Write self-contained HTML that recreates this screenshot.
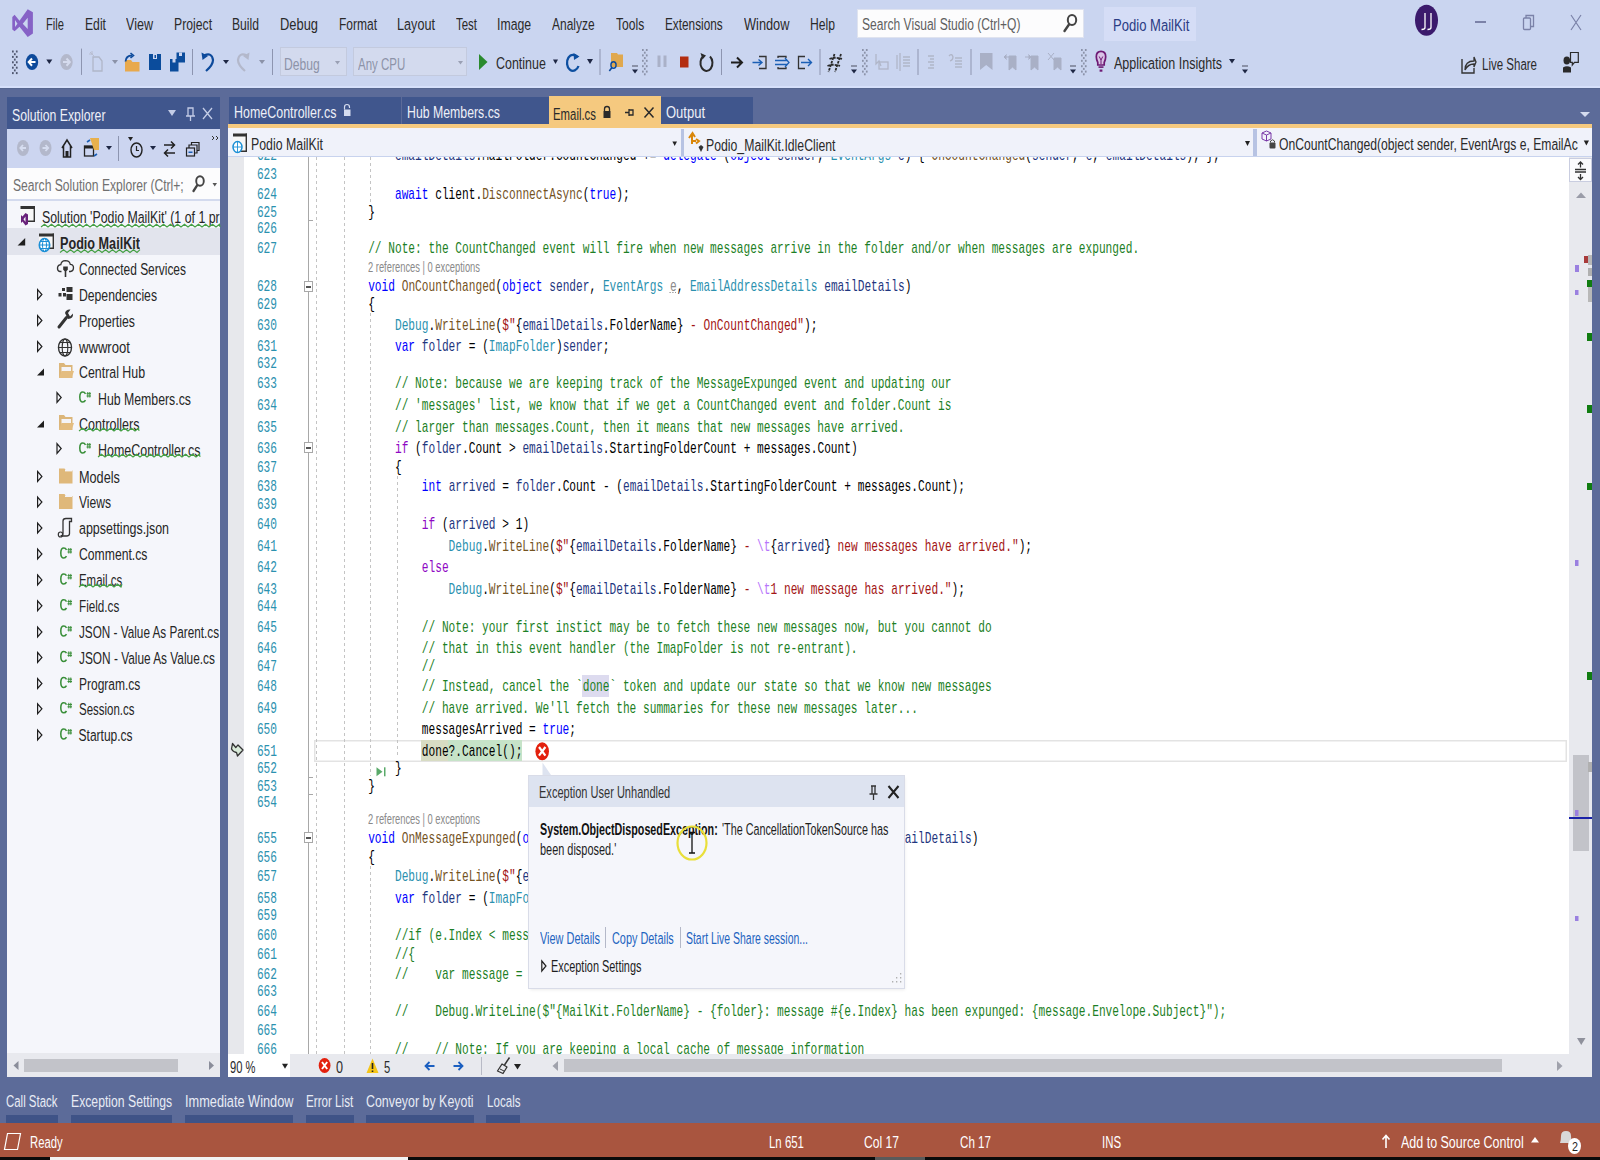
<!DOCTYPE html>
<html><head><meta charset="utf-8"><title>Visual Studio</title>
<style>
html,body{margin:0;padding:0}
body{width:1600px;height:1160px;position:relative;overflow:hidden;background:#5c6b99;font-family:"Liberation Sans",sans-serif}
.r{position:absolute}
.t{position:absolute;white-space:pre;height:20px;line-height:20px;transform-origin:0 50%}
.c{position:absolute;white-space:pre;height:20px;line-height:20px;font-family:"Liberation Mono",monospace;font-size:11.18px;color:#000;transform:scaleY(1.44);transform-origin:0 50%}
.clip{position:absolute;overflow:hidden}
</style></head><body>
<div class="r" style="left:0px;top:0px;width:1600px;height:86px;background:#cad5f0;"></div>
<div class="r" style="left:0px;top:86px;width:1600px;height:2px;background:#d6e0fa;"></div>
<div class="r" style="left:0px;top:88px;width:1600px;height:1px;background:#56668f;"></div>
<div class="r" style="left:280px;top:47px;width:67px;height:29px;background:#d3daee;box-shadow:inset 0 0 0 1px #c3cade;"></div>
<div class="r" style="left:353px;top:47px;width:114px;height:29px;background:#d3daee;box-shadow:inset 0 0 0 1px #c3cade;"></div>
<div class="r" style="left:7px;top:97px;width:213px;height:32px;background:#40568d;"></div>
<div class="r" style="left:7px;top:129px;width:213px;height:39px;background:#ccd5f0;"></div>
<div class="r" style="left:7px;top:168px;width:213px;height:31px;background:#fcfcfd;"></div>
<div class="r" style="left:7px;top:199px;width:213px;height:2px;background:#d3daee;"></div>
<div class="r" style="left:7px;top:201px;width:213px;height:852px;background:#f5f6fb;"></div>
<div class="r" style="left:7px;top:228px;width:213px;height:27px;background:#e2e4ed;"></div>
<div class="r" style="left:7px;top:1053px;width:213px;height:24px;background:#e8e9ee;"></div>
<div class="r" style="left:24px;top:1059px;width:154px;height:13px;background:#c2c3c9;"></div>
<div class="r" style="left:229px;top:97px;width:172px;height:27px;background:#40568d;"></div>
<div class="r" style="left:402px;top:97px;width:147px;height:27px;background:#40568d;"></div>
<div class="r" style="left:549px;top:96px;width:112px;height:28px;background:#f5c97f;"></div>
<div class="r" style="left:661px;top:97px;width:92px;height:27px;background:#40568d;"></div>
<div class="r" style="left:228px;top:124px;width:1364px;height:4px;background:#f5c97f;"></div>
<div class="r" style="left:228px;top:157px;width:1364px;height:897px;background:#ffffff;"></div>
<div class="r" style="left:228px;top:157px;width:16px;height:897px;background:#e7e8ec;"></div>
<div class="r" style="left:308px;top:157px;width:1px;height:897px;background:#a8a8a8;"></div>
<div class="r" style="left:228px;top:1054px;width:1364px;height:23px;background:#e8e9ee;"></div>
<div class="r" style="left:228px;top:1054px;width:62px;height:23px;background:#ffffff;"></div>
<div class="r" style="left:564px;top:1059px;width:938px;height:13px;background:#c2c3c9;"></div>
<div class="r" style="left:1569px;top:157px;width:23px;height:897px;background:#e8e9ee;"></div>
<div class="r" style="left:1573px;top:755px;width:16px;height:96px;background:#c2c3c9;"></div>
<div class="r" style="left:0px;top:1123px;width:1600px;height:34px;background:#a9553f;"></div>
<div class="r" style="left:0px;top:1157px;width:1600px;height:3px;background:#0a0a0a;"></div>
<div class="r" style="left:50px;top:1157px;width:358px;height:3px;background:#f2f2f2;"></div>
<div class="r" style="left:875px;top:1157px;width:50px;height:3px;background:#5a5a5a;"></div>
<div class="clip" style="left:228px;top:157px;width:1341px;height:897px"><div style="position:absolute;left:-228px;top:-157px;width:1600px;height:1160px">
<div class="r" style="left:314px;top:740px;width:1253px;height:22px;background:transparent;box-shadow:inset 0 0 0 1.5px #e3e3e3;"></div>
<div class="r" style="left:421px;top:740px;width:27px;height:21px;background:#d8dcc3;"></div>
<div class="r" style="left:448px;top:740px;width:74px;height:21px;background:#c6e3c8;"></div>
<div class="r" style="left:582px;top:675px;width:27px;height:22px;background:#dddbef;"></div>
<div class="r" style="left:316px;top:157px;width:1px;height:897px;background:repeating-linear-gradient(#c4c4c4 0 3px,transparent 3px 6px)"></div>
<div class="r" style="left:344px;top:157px;width:1px;height:897px;background:repeating-linear-gradient(#c4c4c4 0 3px,transparent 3px 6px)"></div>
<div class="r" style="left:370px;top:157px;width:1px;height:45px;background:repeating-linear-gradient(#c4c4c4 0 3px,transparent 3px 6px)"></div>
<div class="r" style="left:370px;top:313px;width:1px;height:463px;background:repeating-linear-gradient(#c4c4c4 0 3px,transparent 3px 6px)"></div>
<div class="r" style="left:370px;top:866px;width:1px;height:188px;background:repeating-linear-gradient(#c4c4c4 0 3px,transparent 3px 6px)"></div>
<div class="r" style="left:397px;top:476px;width:1px;height:282px;background:repeating-linear-gradient(#c4c4c4 0 3px,transparent 3px 6px)"></div>
<div class="r" style="left:309px;top:220px;width:4px;height:1px;background:#a8a8a8;"></div>
<div class="r" style="left:309px;top:777px;width:4px;height:1px;background:#a8a8a8;"></div>
<div class="r" style="left:309px;top:794px;width:4px;height:1px;background:#a8a8a8;"></div>
<div class="r" style="left:304px;top:281px;width:9px;height:11px;background:#ffffff;box-shadow:inset 0 0 0 1px #a8a8a8;"></div>
<div class="r" style="left:306px;top:286px;width:5px;height:1.5px;background:#555;"></div>
<div class="r" style="left:304px;top:442px;width:9px;height:11px;background:#ffffff;box-shadow:inset 0 0 0 1px #a8a8a8;"></div>
<div class="r" style="left:306px;top:447px;width:5px;height:1.5px;background:#555;"></div>
<div class="r" style="left:304px;top:832px;width:9px;height:11px;background:#ffffff;box-shadow:inset 0 0 0 1px #a8a8a8;"></div>
<div class="r" style="left:306px;top:837px;width:5px;height:1.5px;background:#555;"></div>
<div class="c" style="left:256.88px;top:146.00px;color:#2b91af">622</div>
<div class="c" style="left:314.5px;top:146.00px"><span style="color:#000000">            </span><span style="color:#1f377f">emailDetails</span><span style="color:#000000">.</span><span style="color:#000000">MailFolder</span><span style="color:#000000">.</span><span style="color:#000000">CountChanged</span><span style="color:#000000"> += </span><span style="color:#0000ff">delegate</span><span style="color:#000000"> (</span><span style="color:#0000ff">object</span><span style="color:#000000"> </span><span style="color:#1f377f">sender</span><span style="color:#000000">, </span><span style="color:#2b91af">EventArgs</span><span style="color:#000000"> </span><span style="color:#1f377f">e</span><span style="color:#000000">) { </span><span style="color:#74531f">OnCountChanged</span><span style="color:#000000">(</span><span style="color:#1f377f">sender</span><span style="color:#000000">, </span><span style="color:#1f377f">e</span><span style="color:#000000">, </span><span style="color:#1f377f">emailDetails</span><span style="color:#000000">); };</span></div>
<div class="c" style="left:256.88px;top:165.00px;color:#2b91af">623</div>
<div class="c" style="left:256.88px;top:185.00px;color:#2b91af">624</div>
<div class="c" style="left:314.5px;top:185.00px"><span style="color:#000000">            </span><span style="color:#0000ff">await</span><span style="color:#000000"> </span><span style="color:#000000">client</span><span style="color:#000000">.</span><span style="color:#74531f">DisconnectAsync</span><span style="color:#000000">(</span><span style="color:#0000ff">true</span><span style="color:#000000">);</span></div>
<div class="c" style="left:256.88px;top:202.50px;color:#2b91af">625</div>
<div class="c" style="left:314.5px;top:202.50px"><span style="color:#000000">        }</span></div>
<div class="c" style="left:256.88px;top:219.00px;color:#2b91af">626</div>
<div class="c" style="left:256.88px;top:239.00px;color:#2b91af">627</div>
<div class="c" style="left:314.5px;top:239.00px">        <span style="color:#1d7f26">// Note: the CountChanged event will fire when new messages arrive in the folder and/or when messages are expunged.</span></div>
<div class="c" style="left:256.88px;top:277.00px;color:#2b91af">628</div>
<div class="c" style="left:314.5px;top:277.00px"><span style="color:#000000">        </span><span style="color:#0000ff">void</span><span style="color:#000000"> </span><span style="color:#74531f">OnCountChanged</span><span style="color:#000000">(</span><span style="color:#0000ff">object</span><span style="color:#000000"> </span><span style="color:#1f377f">sender</span><span style="color:#000000">, </span><span style="color:#2b91af">EventArgs</span><span style="color:#000000"> </span><span style="color:#8a8a8a">e</span><span style="color:#000000">, </span><span style="color:#2b91af">EmailAddressDetails</span><span style="color:#000000"> </span><span style="color:#1f377f">emailDetails</span><span style="color:#000000">)</span></div>
<div class="c" style="left:256.88px;top:295.40px;color:#2b91af">629</div>
<div class="c" style="left:314.5px;top:295.40px"><span style="color:#000000">        {</span></div>
<div class="c" style="left:256.88px;top:315.90px;color:#2b91af">630</div>
<div class="c" style="left:314.5px;top:315.90px"><span style="color:#000000">            </span><span style="color:#2b91af">Debug</span><span style="color:#000000">.</span><span style="color:#74531f">WriteLine</span><span style="color:#000000">(</span><span style="color:#a31515">$"</span><span style="color:#000000">{</span><span style="color:#1f377f">emailDetails</span><span style="color:#000000">.</span><span style="color:#000000">FolderName</span><span style="color:#000000">}</span><span style="color:#a31515"> - OnCountChanged</span><span style="color:#a31515">"</span><span style="color:#000000">);</span></div>
<div class="c" style="left:256.88px;top:336.60px;color:#2b91af">631</div>
<div class="c" style="left:314.5px;top:336.60px"><span style="color:#000000">            </span><span style="color:#0000ff">var</span><span style="color:#000000"> </span><span style="color:#1f377f">folder</span><span style="color:#000000"> = (</span><span style="color:#2b91af">ImapFolder</span><span style="color:#000000">)</span><span style="color:#1f377f">sender</span><span style="color:#000000">;</span></div>
<div class="c" style="left:256.88px;top:354.00px;color:#2b91af">632</div>
<div class="c" style="left:256.88px;top:374.00px;color:#2b91af">633</div>
<div class="c" style="left:314.5px;top:374.00px">            <span style="color:#1d7f26">// Note: because we are keeping track of the MessageExpunged event and updating our</span></div>
<div class="c" style="left:256.88px;top:396.00px;color:#2b91af">634</div>
<div class="c" style="left:314.5px;top:396.00px">            <span style="color:#1d7f26">// 'messages' list, we know that if we get a CountChanged event and folder.Count is</span></div>
<div class="c" style="left:256.88px;top:418.00px;color:#2b91af">635</div>
<div class="c" style="left:314.5px;top:418.00px">            <span style="color:#1d7f26">// larger than messages.Count, then it means that new messages have arrived.</span></div>
<div class="c" style="left:256.88px;top:439.00px;color:#2b91af">636</div>
<div class="c" style="left:314.5px;top:439.00px"><span style="color:#000000">            </span><span style="color:#8f08c4">if</span><span style="color:#000000"> (</span><span style="color:#1f377f">folder</span><span style="color:#000000">.</span><span style="color:#000000">Count</span><span style="color:#000000"> &gt; </span><span style="color:#1f377f">emailDetails</span><span style="color:#000000">.</span><span style="color:#000000">StartingFolderCount</span><span style="color:#000000"> + </span><span style="color:#000000">messages</span><span style="color:#000000">.</span><span style="color:#000000">Count</span><span style="color:#000000">)</span></div>
<div class="c" style="left:256.88px;top:458.00px;color:#2b91af">637</div>
<div class="c" style="left:314.5px;top:458.00px"><span style="color:#000000">            {</span></div>
<div class="c" style="left:256.88px;top:477.00px;color:#2b91af">638</div>
<div class="c" style="left:314.5px;top:477.00px"><span style="color:#000000">                </span><span style="color:#0000ff">int</span><span style="color:#000000"> </span><span style="color:#1f377f">arrived</span><span style="color:#000000"> = </span><span style="color:#1f377f">folder</span><span style="color:#000000">.</span><span style="color:#000000">Count</span><span style="color:#000000"> - (</span><span style="color:#1f377f">emailDetails</span><span style="color:#000000">.</span><span style="color:#000000">StartingFolderCount</span><span style="color:#000000"> + </span><span style="color:#000000">messages</span><span style="color:#000000">.</span><span style="color:#000000">Count</span><span style="color:#000000">);</span></div>
<div class="c" style="left:256.88px;top:495.00px;color:#2b91af">639</div>
<div class="c" style="left:256.88px;top:515.00px;color:#2b91af">640</div>
<div class="c" style="left:314.5px;top:515.00px"><span style="color:#000000">                </span><span style="color:#8f08c4">if</span><span style="color:#000000"> (</span><span style="color:#1f377f">arrived</span><span style="color:#000000"> &gt; 1)</span></div>
<div class="c" style="left:256.88px;top:537.00px;color:#2b91af">641</div>
<div class="c" style="left:314.5px;top:537.00px"><span style="color:#000000">                    </span><span style="color:#2b91af">Debug</span><span style="color:#000000">.</span><span style="color:#74531f">WriteLine</span><span style="color:#000000">(</span><span style="color:#a31515">$"</span><span style="color:#000000">{</span><span style="color:#1f377f">emailDetails</span><span style="color:#000000">.</span><span style="color:#000000">FolderName</span><span style="color:#000000">}</span><span style="color:#a31515"> - </span><span style="color:#b776fb">\t</span><span style="color:#000000">{</span><span style="color:#1f377f">arrived</span><span style="color:#000000">}</span><span style="color:#a31515"> new messages have arrived.</span><span style="color:#a31515">"</span><span style="color:#000000">);</span></div>
<div class="c" style="left:256.88px;top:558.00px;color:#2b91af">642</div>
<div class="c" style="left:314.5px;top:558.00px"><span style="color:#000000">                </span><span style="color:#8f08c4">else</span></div>
<div class="c" style="left:256.88px;top:580.00px;color:#2b91af">643</div>
<div class="c" style="left:314.5px;top:580.00px"><span style="color:#000000">                    </span><span style="color:#2b91af">Debug</span><span style="color:#000000">.</span><span style="color:#74531f">WriteLine</span><span style="color:#000000">(</span><span style="color:#a31515">$"</span><span style="color:#000000">{</span><span style="color:#1f377f">emailDetails</span><span style="color:#000000">.</span><span style="color:#000000">FolderName</span><span style="color:#000000">}</span><span style="color:#a31515"> - </span><span style="color:#b776fb">\t</span><span style="color:#a31515">1 new message has arrived.</span><span style="color:#a31515">"</span><span style="color:#000000">);</span></div>
<div class="c" style="left:256.88px;top:597.00px;color:#2b91af">644</div>
<div class="c" style="left:256.88px;top:618.00px;color:#2b91af">645</div>
<div class="c" style="left:314.5px;top:618.00px">                <span style="color:#1d7f26">// Note: your first instict may be to fetch these new messages now, but you cannot do</span></div>
<div class="c" style="left:256.88px;top:639.00px;color:#2b91af">646</div>
<div class="c" style="left:314.5px;top:639.00px">                <span style="color:#1d7f26">// that in this event handler (the ImapFolder is not re-entrant).</span></div>
<div class="c" style="left:256.88px;top:657.00px;color:#2b91af">647</div>
<div class="c" style="left:314.5px;top:657.00px">                <span style="color:#1d7f26">//</span></div>
<div class="c" style="left:256.88px;top:677.00px;color:#2b91af">648</div>
<div class="c" style="left:314.5px;top:677.00px">                <span style="color:#1d7f26">// Instead, cancel the `done` token and update our state so that we know new messages</span></div>
<div class="c" style="left:256.88px;top:699.00px;color:#2b91af">649</div>
<div class="c" style="left:314.5px;top:699.00px">                <span style="color:#1d7f26">// have arrived. We'll fetch the summaries for these new messages later...</span></div>
<div class="c" style="left:256.88px;top:720.00px;color:#2b91af">650</div>
<div class="c" style="left:314.5px;top:720.00px"><span style="color:#000000">                </span><span style="color:#000000">messagesArrived</span><span style="color:#000000"> = </span><span style="color:#0000ff">true</span><span style="color:#000000">;</span></div>
<div class="c" style="left:256.88px;top:742.00px;color:#2b91af">651</div>
<div class="c" style="left:314.5px;top:742.00px">                done?.Cancel();</div>
<div class="c" style="left:256.88px;top:759.00px;color:#2b91af">652</div>
<div class="c" style="left:314.5px;top:759.00px"><span style="color:#000000">            }</span></div>
<div class="c" style="left:256.88px;top:777.00px;color:#2b91af">653</div>
<div class="c" style="left:314.5px;top:777.00px"><span style="color:#000000">        }</span></div>
<div class="c" style="left:256.88px;top:793.00px;color:#2b91af">654</div>
<div class="c" style="left:256.88px;top:829.00px;color:#2b91af">655</div>
<div class="c" style="left:314.5px;top:829.00px"><span style="color:#000000">        </span><span style="color:#0000ff">void</span><span style="color:#000000"> </span><span style="color:#74531f">OnMessageExpunged</span><span style="color:#000000">(</span><span style="color:#0000ff">object</span><span style="color:#000000"> </span><span style="color:#1f377f">sender</span><span style="color:#000000">, </span><span style="color:#2b91af">MessageEventArgs</span><span style="color:#000000"> </span><span style="color:#1f377f">e</span><span style="color:#000000">, </span><span style="color:#2b91af">EmailAddressDetails</span><span style="color:#000000"> </span><span style="color:#1f377f">emailDetails</span><span style="color:#000000">)</span></div>
<div class="c" style="left:256.88px;top:848.00px;color:#2b91af">656</div>
<div class="c" style="left:314.5px;top:848.00px"><span style="color:#000000">        {</span></div>
<div class="c" style="left:256.88px;top:867.00px;color:#2b91af">657</div>
<div class="c" style="left:314.5px;top:867.00px"><span style="color:#000000">            </span><span style="color:#2b91af">Debug</span><span style="color:#000000">.</span><span style="color:#74531f">WriteLine</span><span style="color:#000000">(</span><span style="color:#a31515">$"</span><span style="color:#000000">{</span><span style="color:#1f377f">emailDetails</span><span style="color:#000000">.</span><span style="color:#000000">FolderName</span><span style="color:#000000">}</span><span style="color:#a31515"> - OnMessageExpunged</span><span style="color:#a31515">"</span><span style="color:#000000">);</span></div>
<div class="c" style="left:256.88px;top:889.00px;color:#2b91af">658</div>
<div class="c" style="left:314.5px;top:889.00px"><span style="color:#000000">            </span><span style="color:#0000ff">var</span><span style="color:#000000"> </span><span style="color:#1f377f">folder</span><span style="color:#000000"> = (</span><span style="color:#2b91af">ImapFolder</span><span style="color:#000000">)</span><span style="color:#1f377f">sender</span><span style="color:#000000">;</span></div>
<div class="c" style="left:256.88px;top:906.00px;color:#2b91af">659</div>
<div class="c" style="left:256.88px;top:926.00px;color:#2b91af">660</div>
<div class="c" style="left:314.5px;top:926.00px">            <span style="color:#1d7f26">//if (e.Index &lt; messages.Count)</span></div>
<div class="c" style="left:256.88px;top:945.00px;color:#2b91af">661</div>
<div class="c" style="left:314.5px;top:945.00px">            <span style="color:#1d7f26">//{</span></div>
<div class="c" style="left:256.88px;top:965.00px;color:#2b91af">662</div>
<div class="c" style="left:314.5px;top:965.00px">            <span style="color:#1d7f26">//    var message = messages[e.Index];</span></div>
<div class="c" style="left:256.88px;top:982.00px;color:#2b91af">663</div>
<div class="c" style="left:256.88px;top:1002.00px;color:#2b91af">664</div>
<div class="c" style="left:314.5px;top:1002.00px">            <span style="color:#1d7f26">//    Debug.WriteLine($"{MailKit.FolderName} - {folder}: message #{e.Index} has been expunged: {message.Envelope.Subject}");</span></div>
<div class="c" style="left:256.88px;top:1021.00px;color:#2b91af">665</div>
<div class="c" style="left:256.88px;top:1040.00px;color:#2b91af">666</div>
<div class="c" style="left:314.5px;top:1040.00px">            <span style="color:#1d7f26">//    // Note: If you are keeping a local cache of message information</span></div>
<div class="t" style="left:368.00px;top:258.00px;font-size:10px;color:#8a8a8a;transform:scale(0.9341,1.38);">2 references | 0 exceptions</div>
<div class="t" style="left:368.00px;top:809.70px;font-size:10px;color:#8a8a8a;transform:scale(0.9341,1.38);">2 references | 0 exceptions</div>
</div></div>
<div class="r" style="left:228px;top:128px;width:1364px;height:28px;background:#f0f2fa;"></div>
<div class="r" style="left:228px;top:156px;width:1364px;height:1px;background:#c8d3ee;"></div>
<div class="r" style="left:681px;top:129px;width:3px;height:27px;background:#b7c3e3;"></div>
<div class="r" style="left:1253px;top:129px;width:4px;height:27px;background:#b7c3e3;"></div>
<div class="t" style="left:251.00px;top:133.50px;font-size:12px;color:#2a2a2a;transform:scale(1.0283,1.38);">Podio MailKit</div>
<div class="t" style="left:706.30px;top:134.50px;font-size:12px;color:#2a2a2a;transform:scale(1.0219,1.38);">Podio_MailKit.IdleClient</div>
<div class="t" style="left:1278.75px;top:134.25px;font-size:12px;color:#2a2a2a;transform:scale(1.0133,1.38);">OnCountChanged(object sender, EventArgs e, EmailAc</div>
<div class="t" style="left:46.00px;top:14.40px;font-size:12px;color:#2a2a2a;transform:scale(0.9317,1.38);">File</div>
<div class="t" style="left:85.00px;top:14.40px;font-size:12px;color:#2a2a2a;transform:scale(1.0145,1.38);">Edit</div>
<div class="t" style="left:126.00px;top:14.40px;font-size:12px;color:#2a2a2a;transform:scale(1.0465,1.38);">View</div>
<div class="t" style="left:174.00px;top:14.40px;font-size:12px;color:#2a2a2a;transform:scale(1.0182,1.38);">Project</div>
<div class="t" style="left:232.00px;top:14.40px;font-size:12px;color:#2a2a2a;transform:scale(1.0112,1.38);">Build</div>
<div class="t" style="left:280.00px;top:14.40px;font-size:12px;color:#2a2a2a;transform:scale(1.0753,1.38);">Debug</div>
<div class="t" style="left:339.00px;top:14.40px;font-size:12px;color:#2a2a2a;transform:scale(1.0005,1.38);">Format</div>
<div class="t" style="left:397.00px;top:14.40px;font-size:12px;color:#2a2a2a;transform:scale(1.0538,1.38);">Layout</div>
<div class="t" style="left:455.70px;top:14.40px;font-size:12px;color:#2a2a2a;transform:scale(0.9537,1.38);">Test</div>
<div class="t" style="left:497.20px;top:14.40px;font-size:12px;color:#2a2a2a;transform:scale(1.0222,1.38);">Image</div>
<div class="t" style="left:552.40px;top:14.40px;font-size:12px;color:#2a2a2a;transform:scale(0.9972,1.38);">Analyze</div>
<div class="t" style="left:615.80px;top:14.40px;font-size:12px;color:#2a2a2a;transform:scale(1.0064,1.38);">Tools</div>
<div class="t" style="left:665.00px;top:14.40px;font-size:12px;color:#2a2a2a;transform:scale(0.9833,1.38);">Extensions</div>
<div class="t" style="left:743.50px;top:14.40px;font-size:12px;color:#2a2a2a;transform:scale(1.0651,1.38);">Window</div>
<div class="t" style="left:810.00px;top:14.40px;font-size:12px;color:#2a2a2a;transform:scale(1.0138,1.38);">Help</div>
<div class="r" style="left:857px;top:9px;width:227px;height:29px;background:#fcfcfd;box-shadow:inset 0 0 0 1px #dfe3ef;"></div>
<div class="t" style="left:862.00px;top:14.40px;font-size:12px;color:#5f5f5f;transform:scale(1.0063,1.38);">Search Visual Studio (Ctrl+Q)</div>
<div class="r" style="left:1104px;top:7px;width:92px;height:34px;background:#d5ddf6;"></div>
<div class="t" style="left:1112.50px;top:15.25px;font-size:12px;color:#2b3c84;transform:scale(1.0890,1.38);">Podio MailKit</div>
<div class="t" style="left:284.40px;top:53.60px;font-size:12px;color:#8d93a8;transform:scale(1.0074,1.38);">Debug</div>
<div class="t" style="left:358.20px;top:53.60px;font-size:12px;color:#8d93a8;transform:scale(0.9590,1.38);">Any CPU</div>
<div class="t" style="left:495.60px;top:52.50px;font-size:12px;color:#2a2a2a;transform:scale(1.0383,1.38);">Continue</div>
<div class="t" style="left:1113.80px;top:53.00px;font-size:12px;color:#2a2a2a;transform:scale(1.0437,1.38);">Application Insights</div>
<div class="t" style="left:1482.00px;top:54.40px;font-size:12px;color:#2a2a2a;transform:scale(0.9589,1.38);">Live Share</div>
<div class="t" style="left:11.50px;top:105.15px;font-size:12px;color:#eef0f8;transform:scale(1.0232,1.38);">Solution Explorer</div>
<div class="t" style="left:12.60px;top:174.50px;font-size:12px;color:#707070;transform:scale(1.0096,1.38);">Search Solution Explorer (Ctrl+;</div>
<div class="clip" style="left:7px;top:201px;width:213px;height:852px"><div style="position:absolute;left:-7px;top:-201px"><div class="t" style="left:41.70px;top:207.20px;font-size:12px;color:#262626;transform:scale(1.0290,1.41);">Solution 'Podio MailKit' (1 of 1 project)</div><div class="t" style="left:60.00px;top:233.20px;font-size:12px;font-weight:700;color:#262626;transform:scale(1.0524,1.41);">Podio MailKit</div><div class="t" style="left:79.00px;top:259.20px;font-size:12px;color:#262626;transform:scale(0.9963,1.41);">Connected Services</div><div class="t" style="left:79.00px;top:285.20px;font-size:12px;color:#262626;transform:scale(1.0164,1.41);">Dependencies</div><div class="t" style="left:79.00px;top:311.20px;font-size:12px;color:#262626;transform:scale(1.0234,1.41);">Properties</div><div class="t" style="left:79.07px;top:337.20px;font-size:12px;color:#262626;transform:scale(1.0911,1.41);">wwwroot</div><div class="t" style="left:79.00px;top:362.20px;font-size:12px;color:#262626;transform:scale(1.0309,1.41);">Central Hub</div><div class="t" style="left:98.00px;top:388.90px;font-size:12px;color:#262626;transform:scale(1.0251,1.41);">Hub Members.cs</div><div class="t" style="left:78.60px;top:414.40px;font-size:12px;color:#262626;transform:scale(1.0410,1.41);">Controllers</div><div class="t" style="left:97.60px;top:439.60px;font-size:12px;color:#262626;transform:scale(1.0375,1.41);">HomeController.cs</div><div class="t" style="left:78.60px;top:466.60px;font-size:12px;color:#262626;transform:scale(1.0568,1.41);">Models</div><div class="t" style="left:78.60px;top:492.20px;font-size:12px;color:#262626;transform:scale(1.0094,1.41);">Views</div><div class="t" style="left:78.60px;top:518.20px;font-size:12px;color:#262626;transform:scale(1.0381,1.41);">appsettings.json</div><div class="t" style="left:78.60px;top:544.20px;font-size:12px;color:#262626;transform:scale(1.0160,1.41);">Comment.cs</div><div class="t" style="left:78.60px;top:570.10px;font-size:12px;color:#262626;transform:scale(0.9524,1.41);">Email.cs</div><div class="t" style="left:78.60px;top:596.00px;font-size:12px;color:#262626;transform:scale(0.9748,1.41);">Field.cs</div><div class="t" style="left:78.60px;top:622.20px;font-size:12px;color:#262626;transform:scale(0.9786,1.41);">JSON - Value As Parent.cs</div><div class="t" style="left:78.60px;top:647.60px;font-size:12px;color:#262626;transform:scale(0.9874,1.41);">JSON - Value As Value.cs</div><div class="t" style="left:78.60px;top:673.70px;font-size:12px;color:#262626;transform:scale(1.0003,1.41);">Program.cs</div><div class="t" style="left:78.60px;top:699.00px;font-size:12px;color:#262626;transform:scale(0.9548,1.41);">Session.cs</div><div class="t" style="left:78.60px;top:725.20px;font-size:12px;color:#262626;transform:scale(1.0000,1.41);">Startup.cs</div></div></div>
<div class="t" style="left:233.60px;top:101.80px;font-size:12px;color:#eef0f8;transform:scale(1.0375,1.38);">HomeController.cs</div>
<div class="t" style="left:407.00px;top:101.80px;font-size:12px;color:#eef0f8;transform:scale(1.0251,1.38);">Hub Members.cs</div>
<div class="t" style="left:553.00px;top:103.50px;font-size:12px;color:#2a2a2a;transform:scale(0.9480,1.38);">Email.cs</div>
<div class="t" style="left:666.00px;top:102.00px;font-size:12px;color:#eef0f8;transform:scale(1.0833,1.38);">Output</div>
<div class="t" style="left:6.30px;top:1091.00px;font-size:12px;color:#e8ebf5;transform:scale(0.9517,1.38);">Call Stack</div>
<div class="r" style="left:6px;top:1115px;width:52px;height:8px;background:#3f5387;"></div>
<div class="t" style="left:71.00px;top:1091.00px;font-size:12px;color:#e8ebf5;transform:scale(1.0179,1.38);">Exception Settings</div>
<div class="r" style="left:71px;top:1115px;width:101px;height:8px;background:#3f5387;"></div>
<div class="t" style="left:184.80px;top:1091.00px;font-size:12px;color:#e8ebf5;transform:scale(1.0631,1.38);">Immediate Window</div>
<div class="r" style="left:185px;top:1115px;width:108px;height:8px;background:#3f5387;"></div>
<div class="t" style="left:306.30px;top:1091.00px;font-size:12px;color:#e8ebf5;transform:scale(0.9700,1.38);">Error List</div>
<div class="r" style="left:306px;top:1115px;width:48px;height:8px;background:#3f5387;"></div>
<div class="t" style="left:366.00px;top:1091.00px;font-size:12px;color:#e8ebf5;transform:scale(1.0342,1.38);">Conveyor by Keyoti</div>
<div class="r" style="left:366px;top:1115px;width:108px;height:8px;background:#3f5387;"></div>
<div class="t" style="left:486.50px;top:1091.00px;font-size:12px;color:#e8ebf5;transform:scale(0.9660,1.38);">Locals</div>
<div class="r" style="left:486px;top:1115px;width:34px;height:8px;background:#3f5387;"></div>
<div class="t" style="left:30.00px;top:1131.60px;font-size:12px;color:#ffffff;transform:scale(0.9400,1.38);">Ready</div>
<div class="t" style="left:769.00px;top:1131.60px;font-size:12px;color:#ffffff;transform:scale(0.9532,1.38);">Ln 651</div>
<div class="t" style="left:864.00px;top:1131.60px;font-size:12px;color:#ffffff;transform:scale(1.0092,1.38);">Col 17</div>
<div class="t" style="left:960.00px;top:1131.60px;font-size:12px;color:#ffffff;transform:scale(0.9675,1.38);">Ch 17</div>
<div class="t" style="left:1102.00px;top:1131.60px;font-size:12px;color:#ffffff;transform:scale(0.9510,1.38);">INS</div>
<div class="t" style="left:1400.60px;top:1132.00px;font-size:12px;color:#ffffff;transform:scale(1.0400,1.38);">Add to Source Control</div>
<div class="t" style="left:230.00px;top:1056.80px;font-size:12px;color:#2a2a2a;transform:scale(0.9320,1.38);">90 %</div>
<div class="t" style="left:335.50px;top:1056.80px;font-size:12px;color:#2a2a2a;transform:scale(1.0511,1.38);">0</div>
<div class="t" style="left:383.75px;top:1056.80px;font-size:12px;color:#2a2a2a;transform:scale(0.9384,1.38);">5</div>
<svg class="r" style="left:0;top:0" width="1600" height="1160"><path fill-rule="evenodd" fill="#8662c6" d="M27.7 9.2L32.9 12.2V33.5L27.7 37.1L19.5 26.7L14.6 31.2L12.3 29.6V16.9L14.6 14.8L19.5 20.8Z M27.7 17.8L22.75 23.7L27.7 28.9Z M15 20L17.5 23.7L15 27Z"/><ellipse cx="1072" cy="20" rx="4.2" ry="5" fill="none" stroke="#444" stroke-width="2"/><path d="M1069 24.5L1064.5 31" stroke="#444" stroke-width="2.4" stroke-linecap="round"/><ellipse cx="1426.5" cy="20.2" rx="11.5" ry="15.5" fill="#3b1a6c"/><path d="M1425 13V27.5Q1425 29.5 1421.5 29.5M1431 13V27.5Q1431 29.5 1427.5 29.5" fill="none" stroke="#fff" stroke-width="1.3"/><rect x="1475" y="21" width="11" height="2" fill="#7b82a8"/><rect x="1523.5" y="18" width="7" height="11.5" rx="1" fill="none" stroke="#7b82a8" stroke-width="1.3"/><path d="M1526 18V15.5H1533.5V26.5H1530.5" fill="none" stroke="#7b82a8" stroke-width="1.3"/><path d="M1571 15L1581 30M1581 15L1571 30" stroke="#7b82a8" stroke-width="1.2"/><rect x="12" y="50.5" width="1.7" height="2" fill="#4f566e"/><rect x="15.9" y="50.5" width="1.7" height="2" fill="#4f566e"/><rect x="13.95" y="53.2" width="1.7" height="2" fill="#4f566e"/><rect x="12" y="55.9" width="1.7" height="2" fill="#4f566e"/><rect x="15.9" y="55.9" width="1.7" height="2" fill="#4f566e"/><rect x="13.95" y="58.6" width="1.7" height="2" fill="#4f566e"/><rect x="12" y="61.3" width="1.7" height="2" fill="#4f566e"/><rect x="15.9" y="61.3" width="1.7" height="2" fill="#4f566e"/><rect x="13.95" y="64.0" width="1.7" height="2" fill="#4f566e"/><rect x="12" y="66.7" width="1.7" height="2" fill="#4f566e"/><rect x="15.9" y="66.7" width="1.7" height="2" fill="#4f566e"/><rect x="13.95" y="69.4" width="1.7" height="2" fill="#4f566e"/><rect x="12" y="72.1" width="1.7" height="2" fill="#4f566e"/><rect x="15.9" y="72.1" width="1.7" height="2" fill="#4f566e"/><ellipse cx="32" cy="62.1" rx="6.2" ry="8" fill="#0d4a9b"/><path d="M35.5 62.1H29.5M32 58.5L28.7 62.1L32 65.7" fill="none" stroke="#fff" stroke-width="2"/><path d="M46.3 59.5H52.3L49.3 64Z" fill="#1e2744"/><ellipse cx="66.5" cy="62.1" rx="6.2" ry="8" fill="#b3b8cb"/><path d="M63 62.1H69M66.5 58.5L69.8 62.1L66.5 65.7" fill="none" stroke="#d5dbee" stroke-width="2"/><rect x="81.0" y="48.6" width="1" height="26.300000000000004" fill="#8d95b0"/><path d="M93 57H99L102 61V71H93Z" fill="none" stroke="#b0b6c8" stroke-width="1.3"/><path d="M90 52L94 56M92 51V55M89 54H93" stroke="#b8bdd0" stroke-width="1"/><path d="M112 60H118L115.0 64Z" fill="#8b92a8"/><path d="M125 60H131L132.5 62H139.5V71.5H125Z" fill="#e8a94c"/><path d="M125.5 61.5Q126 55.5 132 55.5" fill="none" stroke="#0d4a9b" stroke-width="1.8"/><path d="M130.5 53L133.5 55.5L130.5 58" fill="none" stroke="#0d4a9b" stroke-width="1.6"/><path d="M149 54H161V70H149Z" fill="#0b4c9c"/><rect x="153" y="54" width="4" height="5" fill="#ccd5f0"/><rect x="154.5" y="55" width="1.5" height="3" fill="#0b4c9c"/><path d="M176.5 52.5H185V62.5H176.5Z" fill="#0b4c9c"/><rect x="179" y="52.5" width="3" height="3.5" fill="#ccd5f0"/><path d="M170 59H178.5V71.5H170Z" fill="#0b4c9c"/><rect x="172.5" y="59" width="3" height="3.5" fill="#ccd5f0"/><rect x="192.0" y="49" width="1" height="26" fill="#8d95b0"/><path d="M204 55.5Q212 52 213 60Q213 65 206 71" fill="none" stroke="#0d4a9b" stroke-width="2.2"/><path d="M201.5 52.5L202.5 60L208 56Z" fill="#0d4a9b"/><path d="M223 60H229L226.0 64Z" fill="#1e2744"/><path d="M247 55.5Q239 52 238 60Q238 65 245 71" fill="none" stroke="#b3b8cb" stroke-width="2.2"/><path d="M249.5 52.5L248.5 60L243 56Z" fill="#b3b8cb"/><path d="M259 60H265L262.0 64Z" fill="#8b92a8"/><rect x="272.0" y="49" width="1" height="26" fill="#8d95b0"/><path d="M335 61H340L337.5 64.5Z" fill="#9aa0b4"/><path d="M458 61H463L460.5 64.5Z" fill="#9aa0b4"/><path d="M479 54L487.5 62L479 70Z" fill="#2a8a2e"/><path d="M553 59.5H558L555.5 64Z" fill="#1e2744"/><path d="M577.5 57.5A6 8 0 1 0 578.5 66" fill="none" stroke="#0d4fa0" stroke-width="2.3"/><path d="M573.5 53L579.5 56.5L574 60Z" fill="#0d4fa0"/><path d="M587 59H593L590.0 64Z" fill="#1e2744"/><rect x="599.5" y="49" width="1" height="26" fill="#8d95b0"/><path d="M611 53H617L618 54.5H623V67H611Z" fill="#e0a84e"/><ellipse cx="613.5" cy="65" rx="2.6" ry="3.2" fill="none" stroke="#0d4a9b" stroke-width="1.4"/><path d="M611.8 67.8L609.3 71" stroke="#0d4a9b" stroke-width="1.6"/><rect x="632" y="65" width="6" height="2" fill="#8b92a8"/><path d="M632 69.5H638L635.0 73.5Z" fill="#1e2744"/><rect x="642" y="49.0" width="1.7" height="2" fill="#8b92a8"/><rect x="645.9" y="49.0" width="1.7" height="2" fill="#8b92a8"/><rect x="643.95" y="51.7" width="1.7" height="2" fill="#8b92a8"/><rect x="642" y="54.4" width="1.7" height="2" fill="#8b92a8"/><rect x="645.9" y="54.4" width="1.7" height="2" fill="#8b92a8"/><rect x="643.95" y="57.1" width="1.7" height="2" fill="#8b92a8"/><rect x="642" y="59.8" width="1.7" height="2" fill="#8b92a8"/><rect x="645.9" y="59.8" width="1.7" height="2" fill="#8b92a8"/><rect x="643.95" y="62.5" width="1.7" height="2" fill="#8b92a8"/><rect x="642" y="65.2" width="1.7" height="2" fill="#8b92a8"/><rect x="645.9" y="65.2" width="1.7" height="2" fill="#8b92a8"/><rect x="643.95" y="67.9" width="1.7" height="2" fill="#8b92a8"/><rect x="642" y="70.6" width="1.7" height="2" fill="#8b92a8"/><rect x="645.9" y="70.6" width="1.7" height="2" fill="#8b92a8"/><rect x="643.95" y="73.3" width="1.7" height="2" fill="#8b92a8"/><rect x="657.5" y="55.5" width="3" height="11.5" fill="#aab1c8"/><rect x="663.5" y="55.5" width="3" height="11.5" fill="#aab1c8"/><rect x="680" y="56.5" width="8.5" height="11" fill="#b32d10"/><path d="M703.5 56A6 8 0 1 0 710 56.5" fill="none" stroke="#2a2a2a" stroke-width="2"/><path d="M700.5 53L706 55.5L702.5 59.5Z" fill="#2a2a2a"/><rect x="721.0" y="49" width="1" height="26" fill="#8d95b0"/><path d="M731 62.5H741.5M737 57.5L742 62.5L737 67.5" fill="none" stroke="#1e1e1e" stroke-width="2"/><path d="M759 56.5H766V68.5H759" fill="none" stroke="#333" stroke-width="1.3"/><path d="M752.5 62.5H762M758.5 59.5L762 62.5L758.5 65.5" fill="none" stroke="#1b5fb5" stroke-width="1.4"/><path d="M778 58V56.5H786V58M778 67V68.5H786V67" fill="none" stroke="#333" stroke-width="1.3"/><path d="M775 60.5H787M775 64.5H787M785 58L789 62.5L785 67" fill="none" stroke="#1b5fb5" stroke-width="1.3"/><path d="M805 56.5H798.5V68.5H805" fill="none" stroke="#333" stroke-width="1.3"/><path d="M801 62.5H811.5M808 59L811.5 62.5L808 66" fill="none" stroke="#1b5fb5" stroke-width="1.4"/><rect x="819.5" y="49" width="1" height="26" fill="#8d95b0"/><path d="M834.5 54L828.5 72M841 54L835 72M827.5 66Q833 63.5 840 66M829.5 59Q835 56.5 842 59" fill="none" stroke="#2a2a2a" stroke-width="1.8" stroke-dasharray="2.6 1.1"/><rect x="851" y="65" width="6" height="2" fill="#8b92a8"/><path d="M851 69.5H857L854.0 73.5Z" fill="#1e2744"/><rect x="862" y="49.0" width="1.7" height="2" fill="#8b92a8"/><rect x="865.9" y="49.0" width="1.7" height="2" fill="#8b92a8"/><rect x="863.95" y="51.7" width="1.7" height="2" fill="#8b92a8"/><rect x="862" y="54.4" width="1.7" height="2" fill="#8b92a8"/><rect x="865.9" y="54.4" width="1.7" height="2" fill="#8b92a8"/><rect x="863.95" y="57.1" width="1.7" height="2" fill="#8b92a8"/><rect x="862" y="59.8" width="1.7" height="2" fill="#8b92a8"/><rect x="865.9" y="59.8" width="1.7" height="2" fill="#8b92a8"/><rect x="863.95" y="62.5" width="1.7" height="2" fill="#8b92a8"/><rect x="862" y="65.2" width="1.7" height="2" fill="#8b92a8"/><rect x="865.9" y="65.2" width="1.7" height="2" fill="#8b92a8"/><rect x="863.95" y="67.9" width="1.7" height="2" fill="#8b92a8"/><rect x="862" y="70.6" width="1.7" height="2" fill="#8b92a8"/><rect x="865.9" y="70.6" width="1.7" height="2" fill="#8b92a8"/><rect x="863.95" y="73.3" width="1.7" height="2" fill="#8b92a8"/><path d="M876 54V64L879 61L881 66" fill="none" stroke="#b0b6c8" stroke-width="1.3"/><rect x="879" y="62" width="9" height="7" fill="none" stroke="#b0b6c8" stroke-width="1.3"/><path d="M897 55V69M900 53V71M903 57H910M903 60H910M903 63H910M903 66H910" stroke="#b0b6c8" stroke-width="1.3"/><rect x="917.5" y="49" width="1" height="26" fill="#8d95b0"/><path d="M928 56H934M930 59H934M928 62H934M930 65H934M928 68H934" stroke="#b0b6c8" stroke-width="1.3"/><path d="M949 56Q952 53 953 57Q953 60 950 61M955 58H962M955 61H962M955 64H962M955 67H962" fill="none" stroke="#b0b6c8" stroke-width="1.3"/><rect x="970.5" y="49" width="1" height="26" fill="#8d95b0"/><path d="M980 53H992.5V70L986.2 65L980 70Z" fill="#a9b0c6"/><path d="M1009 56H1016V70L1012.5 67L1009 70ZM1004 57H1010M1006.5 54.5L1004 57L1006.5 59.5" fill="#a9b0c6" stroke="#a9b0c6" stroke-width="1"/><path d="M1031 56H1038V70L1034.5 67L1031 70ZM1025 57H1031M1028.5 54.5L1031 57L1028.5 59.5" fill="#a9b0c6" stroke="#a9b0c6" stroke-width="1"/><path d="M1054 58H1061V70L1057.5 67L1054 70ZM1048 53L1054 60M1054 53L1048 60" fill="#a9b0c6" stroke="#a9b0c6" stroke-width="1"/><rect x="1070" y="65" width="6" height="2" fill="#8b92a8"/><path d="M1070 69.5H1076L1073.0 73.5Z" fill="#1e2744"/><rect x="1081" y="49.0" width="1.7" height="2" fill="#8b92a8"/><rect x="1084.9" y="49.0" width="1.7" height="2" fill="#8b92a8"/><rect x="1082.95" y="51.7" width="1.7" height="2" fill="#8b92a8"/><rect x="1081" y="54.4" width="1.7" height="2" fill="#8b92a8"/><rect x="1084.9" y="54.4" width="1.7" height="2" fill="#8b92a8"/><rect x="1082.95" y="57.1" width="1.7" height="2" fill="#8b92a8"/><rect x="1081" y="59.8" width="1.7" height="2" fill="#8b92a8"/><rect x="1084.9" y="59.8" width="1.7" height="2" fill="#8b92a8"/><rect x="1082.95" y="62.5" width="1.7" height="2" fill="#8b92a8"/><rect x="1081" y="65.2" width="1.7" height="2" fill="#8b92a8"/><rect x="1084.9" y="65.2" width="1.7" height="2" fill="#8b92a8"/><rect x="1082.95" y="67.9" width="1.7" height="2" fill="#8b92a8"/><rect x="1081" y="70.6" width="1.7" height="2" fill="#8b92a8"/><rect x="1084.9" y="70.6" width="1.7" height="2" fill="#8b92a8"/><rect x="1082.95" y="73.3" width="1.7" height="2" fill="#8b92a8"/><path d="M1097.8 62.5Q1096.3 59.5 1096.3 56.8Q1096.3 51.3 1101 51.3Q1105.7 51.3 1105.7 56.8Q1105.7 59.5 1104.2 62.5V65H1097.8Z" fill="#d9c3e6" stroke="#6e1a74" stroke-width="1.7"/><path d="M1099.2 56.5L1101 60L1102.8 56.5M1101 60V64" fill="none" stroke="#6e1a74" stroke-width="1"/><rect x="1098.5" y="66.3" width="5" height="1.6" fill="#6e1a74"/><rect x="1099.6" y="69.5" width="2.8" height="2.2" fill="#6e1a74"/><path d="M1229 59H1235L1232.0 63.5Z" fill="#1e2744"/><rect x="1242" y="65" width="6" height="2" fill="#8b92a8"/><path d="M1242 69.5H1248L1245.0 73.5Z" fill="#1e2744"/><path d="M1462 59V73H1474V68" fill="none" stroke="#333" stroke-width="1.4"/><path d="M1465 70Q1465 61 1474 61V57L1476 62L1474 67V64Q1468 64 1465 70Z" fill="none" stroke="#333" stroke-width="1.3"/><path d="M1570.5 52.5H1578.3V62.3H1574.5L1572.3 65V62.3H1570.5Z" fill="none" stroke="#2a2a2a" stroke-width="1.2"/><ellipse cx="1566.8" cy="60.5" rx="3.3" ry="3.9" fill="#2a2a2a"/><path d="M1563 72.5V67.5Q1567 64.8 1571 67.5V72.5Z" fill="#2a2a2a"/><path d="M168 110H176L172 116Z" fill="#c3cce6"/><path d="M188 108H193V116H188ZM186 116H195M190.5 116V121" fill="none" stroke="#c3cce6" stroke-width="1.3"/><path d="M203 108L212 119M212 108L203 119" stroke="#c3cce6" stroke-width="1.3"/><ellipse cx="23" cy="148" rx="6" ry="8" fill="#b3b8cb"/><path d="M26 148H20.5M23 145L20.3 148L23 151" fill="none" stroke="#d6ddf0" stroke-width="1.8"/><ellipse cx="45.5" cy="148" rx="6" ry="8" fill="#b3b8cb"/><path d="M42.5 148H48M45.5 145L48.2 148L45.5 151" fill="none" stroke="#d6ddf0" stroke-width="1.8"/><path d="M62 148L67 140L72 148M63.5 146V157H70.5V146" fill="none" stroke="#222" stroke-width="1.5"/><rect x="65.5" y="151" width="3" height="6" fill="#222"/><rect x="84.5" y="146" width="9" height="10" fill="none" stroke="#222" stroke-width="1.3"/><rect x="84.5" y="146" width="9" height="2.5" fill="#222"/><path d="M90 138H99V150H94" fill="#e8b04c"/><path d="M87 142L90 140M97 154L94 156" stroke="#1b5fb5" stroke-width="1.6"/><path d="M106 146H112L109.0 150Z" fill="#1e2744"/><rect x="118.0" y="136" width="1" height="25" fill="#8d95b0"/><ellipse cx="136.5" cy="150" rx="5.5" ry="7" fill="none" stroke="#222" stroke-width="1.4"/><path d="M136.5 146V150.5H139" fill="none" stroke="#222" stroke-width="1.2"/><path d="M128 137H133L130.5 141Z" fill="#222"/><path d="M150 146H156L153.0 150Z" fill="#1e2744"/><path d="M164 145H174M171 141.5L174.5 145L171 148.5M175 153H165M168 149.5L164.5 153L168 156.5" fill="none" stroke="#222" stroke-width="1.5"/><rect x="186.5" y="148" width="8" height="8" fill="none" stroke="#222" stroke-width="1.2"/><path d="M189 148V145H197V153H194.5M191.5 145V142.5H199V150.5H197" fill="none" stroke="#222" stroke-width="1.2"/><rect x="188.5" y="151.5" width="4" height="1.5" fill="#1b5fb5"/><path d="M212 136L214 138L212 140M216 136L218 138L216 140" fill="none" stroke="#333" stroke-width="1"/><ellipse cx="200" cy="181" rx="3.8" ry="4.8" fill="none" stroke="#444" stroke-width="1.9"/><path d="M197.3 185.2L193.5 191" stroke="#444" stroke-width="2.3" stroke-linecap="round"/><path d="M212.5 183H217L214.75 186.5Z" fill="#555"/><rect x="20.5" y="206" width="14.5" height="16" fill="#f7f7f7"/><rect x="20.5" y="206" width="14.5" height="3" fill="#333"/><path d="M34.3 206V221.3H26.5" fill="none" stroke="#333" stroke-width="1.4"/><path fill-rule="evenodd" fill="#68217a" d="M25.5 213L28 214.5V224L25.5 225.5L22.5 221.5L21 223V215L22.5 216.5Z M25.5 216.5L23.5 219.3L25.5 222Z"/><path d="M25.2 238V245.5H17.6Z" fill="#1e1e1e"/><rect x="39" y="233.5" width="15" height="15.5" fill="#f7f7f7"/><rect x="39" y="233.5" width="15" height="3" fill="#333"/><path d="M53.3 233.5V248.3H45" fill="none" stroke="#333" stroke-width="1.4"/><ellipse cx="44.5" cy="245" rx="5.2" ry="6.5" fill="#fff" stroke="#1c8fd6" stroke-width="1.6"/><ellipse cx="44.5" cy="245" rx="2" ry="6.5" fill="none" stroke="#1c8fd6" stroke-width="1"/><path d="M39.5 245H49.5M40.5 241.5H48.5M40.5 248.5H48.5" fill="none" stroke="#1c8fd6" stroke-width="1"/><path d="M61.5 271.5H59.8Q57.3 271.2 57.5 267.8Q57.8 264.8 60.8 264.6Q61.3 260.8 65.3 260.6Q69.6 260.6 70.3 264.4Q73.6 264.6 73.5 268Q73.3 271.3 70.5 271.5H69" fill="none" stroke="#333" stroke-width="1.3"/><path d="M63.2 266.5H67.8V269.8L66.3 271.3V277H64.7V271.3L63.2 269.8Z" fill="#333"/><path d="M37.6 289.6L41.9 294.5L37.6 299.4Z" fill="none" stroke="#1e1e1e" stroke-width="1.2"/><rect x="58.5" y="293" width="3" height="3.5" fill="#333"/><rect x="63" y="293" width="3" height="3.5" fill="#333"/><rect x="66.5" y="287" width="6" height="5" fill="#333"/><rect x="66.5" y="294" width="6" height="6" fill="#333"/><rect x="62" y="288" width="3" height="3" fill="#333"/><path d="M37.6 315.6L41.9 320.5L37.6 325.4Z" fill="none" stroke="#1e1e1e" stroke-width="1.2"/><path d="M59 327L66.5 317.5" stroke="#333" stroke-width="3" stroke-linecap="round"/><path d="M65 313Q66 309 70.5 309.5L68 313L70 316.5L73 313.5Q73.5 318.5 68 319Z" fill="#333"/><path d="M37.6 341.6L41.9 346.5L37.6 351.4Z" fill="none" stroke="#1e1e1e" stroke-width="1.2"/><ellipse cx="65" cy="347.5" rx="6.5" ry="8.5" fill="none" stroke="#333" stroke-width="1.4"/><ellipse cx="65" cy="347.5" rx="2.8" ry="8.5" fill="none" stroke="#333" stroke-width="1.1"/><path d="M58.5 347.5H71.5M59.5 342.5H70.5M59.5 352.5H70.5" fill="none" stroke="#333" stroke-width="1.1"/><path d="M44 368.5V375.5H37Z" fill="#1e1e1e"/><path d="M59 363H64L65.5 365H72.5V378H59Z" fill="#dcb67a"/><path d="M61.5 367H71V373H61.5Z" fill="#f4f4f8"/><path d="M59 378L61.5 371H74L71.5 378Z" fill="#e4bd80"/><path d="M57.0 392.6L61.199999999999996 397.5L57.0 402.4Z" fill="none" stroke="#1e1e1e" stroke-width="1.2"/><path d="M85.5 393.8Q84.5 392 82.8 392Q79.8 392 79.8 397Q79.8 402 82.8 402Q84.5 402 85.5 400.2" fill="none" stroke="#3a8f3a" stroke-width="1.55"/><path d="M87.8 392V397.5M89.8 392V397.5M86.5 393.7H91M86.5 396H91" stroke="#3a8f3a" stroke-width="1"/><path d="M44 420.5V427.5H37Z" fill="#1e1e1e"/><path d="M59 415H64L65.5 417H72.5V430H59Z" fill="#dcb67a"/><path d="M61.5 419H71V425H61.5Z" fill="#f4f4f8"/><path d="M59 430L61.5 423H74L71.5 430Z" fill="#e4bd80"/><path d="M57.0 443.6L61.199999999999996 448.5L57.0 453.4Z" fill="none" stroke="#1e1e1e" stroke-width="1.2"/><path d="M85.5 444.8Q84.5 443 82.8 443Q79.8 443 79.8 448Q79.8 453 82.8 453Q84.5 453 85.5 451.2" fill="none" stroke="#3a8f3a" stroke-width="1.55"/><path d="M87.8 443V448.5M89.8 443V448.5M86.5 444.7H91M86.5 447H91" stroke="#3a8f3a" stroke-width="1"/><path d="M37.6 471.5L41.9 476.4L37.6 481.29999999999995Z" fill="none" stroke="#1e1e1e" stroke-width="1.2"/><path d="M59 468.4H64.5L66 470.4H72.5V483.4H59Z" fill="#dfb87a"/><rect x="65" y="469.9" width="7" height="1.5" fill="#f4f4f8"/><path d="M37.6 497.1L41.9 502.0L37.6 506.9Z" fill="none" stroke="#1e1e1e" stroke-width="1.2"/><path d="M59 494H64.5L66 496H72.5V509H59Z" fill="#dfb87a"/><rect x="65" y="495.5" width="7" height="1.5" fill="#f4f4f8"/><path d="M37.6 523.1L41.9 528.0L37.6 532.9Z" fill="none" stroke="#1e1e1e" stroke-width="1.2"/><path d="M63 521V533Q63 536 60.5 536M63 521Q63 518.5 66 518.5H71.5V521.5H69.5V533.5Q69.5 536 66.5 536H62" fill="none" stroke="#333" stroke-width="1.3"/><ellipse cx="60.5" cy="534.5" rx="2.2" ry="2.5" fill="none" stroke="#333" stroke-width="1.2"/><path d="M37.6 549.1L41.9 554.0L37.6 558.9Z" fill="none" stroke="#1e1e1e" stroke-width="1.2"/><path d="M66.5 549.8Q65.5 548 63.8 548Q60.8 548 60.8 553Q60.8 558 63.8 558Q65.5 558 66.5 556.2" fill="none" stroke="#3a8f3a" stroke-width="1.55"/><path d="M68.8 548V553.5M70.8 548V553.5M67.5 549.7H72M67.5 552H72" stroke="#3a8f3a" stroke-width="1"/><path d="M37.6 575.0L41.9 579.9L37.6 584.8Z" fill="none" stroke="#1e1e1e" stroke-width="1.2"/><path d="M66.5 575.6999999999999Q65.5 573.9 63.8 573.9Q60.8 573.9 60.8 578.9Q60.8 583.9 63.8 583.9Q65.5 583.9 66.5 582.1" fill="none" stroke="#3a8f3a" stroke-width="1.55"/><path d="M68.8 573.9V579.4M70.8 573.9V579.4M67.5 575.6H72M67.5 577.9H72" stroke="#3a8f3a" stroke-width="1"/><path d="M37.6 600.9L41.9 605.8L37.6 610.6999999999999Z" fill="none" stroke="#1e1e1e" stroke-width="1.2"/><path d="M66.5 601.5999999999999Q65.5 599.8 63.8 599.8Q60.8 599.8 60.8 604.8Q60.8 609.8 63.8 609.8Q65.5 609.8 66.5 608.0" fill="none" stroke="#3a8f3a" stroke-width="1.55"/><path d="M68.8 599.8V605.3M70.8 599.8V605.3M67.5 601.5H72M67.5 603.8H72" stroke="#3a8f3a" stroke-width="1"/><path d="M37.6 627.1L41.9 632.0L37.6 636.9Z" fill="none" stroke="#1e1e1e" stroke-width="1.2"/><path d="M66.5 627.8Q65.5 626 63.8 626Q60.8 626 60.8 631Q60.8 636 63.8 636Q65.5 636 66.5 634.2" fill="none" stroke="#3a8f3a" stroke-width="1.55"/><path d="M68.8 626V631.5M70.8 626V631.5M67.5 627.7H72M67.5 630H72" stroke="#3a8f3a" stroke-width="1"/><path d="M37.6 652.5L41.9 657.4L37.6 662.3Z" fill="none" stroke="#1e1e1e" stroke-width="1.2"/><path d="M66.5 653.1999999999999Q65.5 651.4 63.8 651.4Q60.8 651.4 60.8 656.4Q60.8 661.4 63.8 661.4Q65.5 661.4 66.5 659.6" fill="none" stroke="#3a8f3a" stroke-width="1.55"/><path d="M68.8 651.4V656.9M70.8 651.4V656.9M67.5 653.1H72M67.5 655.4H72" stroke="#3a8f3a" stroke-width="1"/><path d="M37.6 678.6L41.9 683.5L37.6 688.4Z" fill="none" stroke="#1e1e1e" stroke-width="1.2"/><path d="M66.5 679.3Q65.5 677.5 63.8 677.5Q60.8 677.5 60.8 682.5Q60.8 687.5 63.8 687.5Q65.5 687.5 66.5 685.7" fill="none" stroke="#3a8f3a" stroke-width="1.55"/><path d="M68.8 677.5V683.0M70.8 677.5V683.0M67.5 679.2H72M67.5 681.5H72" stroke="#3a8f3a" stroke-width="1"/><path d="M37.6 703.9L41.9 708.8L37.6 713.6999999999999Z" fill="none" stroke="#1e1e1e" stroke-width="1.2"/><path d="M66.5 704.5999999999999Q65.5 702.8 63.8 702.8Q60.8 702.8 60.8 707.8Q60.8 712.8 63.8 712.8Q65.5 712.8 66.5 711.0" fill="none" stroke="#3a8f3a" stroke-width="1.55"/><path d="M68.8 702.8V708.3M70.8 702.8V708.3M67.5 704.5H72M67.5 706.8H72" stroke="#3a8f3a" stroke-width="1"/><path d="M37.6 730.1L41.9 735.0L37.6 739.9Z" fill="none" stroke="#1e1e1e" stroke-width="1.2"/><path d="M66.5 730.8Q65.5 729 63.8 729Q60.8 729 60.8 734Q60.8 739 63.8 739Q65.5 739 66.5 737.2" fill="none" stroke="#3a8f3a" stroke-width="1.55"/><path d="M68.8 729V734.5M70.8 729V734.5M67.5 730.7H72M67.5 733H72" stroke="#3a8f3a" stroke-width="1"/><path d="M41 227L44.5 224.2L48.0 227L51.5 224.2L55.0 227L58.5 224.2L62.0 227L65.5 224.2L69.0 227L72.5 224.2L76.0 227L79.5 224.2L83.0 227L86.5 224.2L90.0 227L93.5 224.2L97.0 227L100.5 224.2L104.0 227L107.5 224.2L111.0 227L114.5 224.2L118.0 227L121.5 224.2L125.0 227L128.5 224.2L132.0 227L135.5 224.2L139.0 227L142.5 224.2L146.0 227L149.5 224.2L153.0 227L156.5 224.2L160.0 227L163.5 224.2L167.0 227L170.5 224.2L174.0 227L177.5 224.2L181.0 227L184.5 224.2L188.0 227L191.5 224.2L195.0 227L198.5 224.2L202.0 227L205.5 224.2L209.0 227L212.5 224.2L216.0 227L219.5 224.2L220.0 227" fill="none" stroke="#45a045" stroke-width="1.1"/><path d="M60 252.5L63.5 249.7L67.0 252.5L70.5 249.7L74.0 252.5L77.5 249.7L81.0 252.5L84.5 249.7L88.0 252.5L91.5 249.7L95.0 252.5L98.5 249.7L102.0 252.5L105.5 249.7L109.0 252.5L112.5 249.7L116.0 252.5L119.5 249.7L123.0 252.5L126.5 249.7L130.0 252.5L133.5 249.7L137.0 252.5L140.0 249.7" fill="none" stroke="#45a045" stroke-width="1.1"/><path d="M79 431L82.5 428.2L86.0 431L89.5 428.2L93.0 431L96.5 428.2L100.0 431L103.5 428.2L107.0 431L110.5 428.2L114.0 431L117.5 428.2L121.0 431L124.5 428.2L128.0 431L131.5 428.2L135.0 431L138.5 428.2L139.0 431" fill="none" stroke="#45a045" stroke-width="1.1"/><path d="M98 457L101.5 454.2L105.0 457L108.5 454.2L112.0 457L115.5 454.2L119.0 457L122.5 454.2L126.0 457L129.5 454.2L133.0 457L136.5 454.2L140.0 457L143.5 454.2L147.0 457L150.5 454.2L154.0 457L157.5 454.2L161.0 457L164.5 454.2L168.0 457L171.5 454.2L175.0 457L178.5 454.2L182.0 457L185.5 454.2L189.0 457L192.5 454.2L196.0 457L199.5 454.2L200.0 457" fill="none" stroke="#45a045" stroke-width="1.1"/><path d="M79 587L82.5 584.2L86.0 587L89.5 584.2L93.0 587L96.5 584.2L100.0 587L103.5 584.2L107.0 587L110.5 584.2L114.0 587L117.5 584.2L121.0 587L122.0 584.2" fill="none" stroke="#45a045" stroke-width="1.1"/><path d="M344.5 109.5V107Q344.5 104.5 347 104.5Q349.5 104.5 349.5 107V108" fill="none" stroke="#d5dcef" stroke-width="1.2"/><rect x="344" y="109.5" width="6.5" height="6.5" fill="#d5dcef"/><path d="M604.5 111V109Q604.5 106.5 607 106.5Q609.5 106.5 609.5 109V111" fill="none" stroke="#2a2a2a" stroke-width="1.3"/><rect x="603.5" y="111" width="7" height="7" fill="#2a2a2a"/><path d="M625 112.5H629M629 109V116M629 110H633V115H629" fill="none" stroke="#2a2a2a" stroke-width="1.3"/><path d="M644.5 107.5L653.5 117.5M653.5 107.5L644.5 117.5" stroke="#2a2a2a" stroke-width="1.5"/><path d="M1580 112H1590L1585 117Z" fill="#d5dcef"/><rect x="233" y="133.5" width="14" height="18.5" fill="#f7f7f7"/><rect x="233" y="133.5" width="14" height="3" fill="#333"/><path d="M246.3 133.5V151.3H239" fill="none" stroke="#333" stroke-width="1.4"/><ellipse cx="237.5" cy="147" rx="4.5" ry="5.5" fill="#fff" stroke="#1c8fd6" stroke-width="1.5"/><path d="M233 147H242M237.5 141.5V152.5" stroke="#1c8fd6" stroke-width="0.9"/><path d="M672.4 141.6H677L674.7 146Z" fill="#222"/><path d="M689 138L692.5 133L695 137M692 134V141H696M696 139L699 141L696 143.5M692 141V144" fill="none" stroke="#d9860a" stroke-width="2"/><path d="M698.5 147L701 145L703.5 147L701 152Z" fill="#333"/><path d="M1245 141H1250L1247.5 146Z" fill="#222"/><path d="M1262 133L1266.5 131L1271 133V139L1266.5 141L1262 139ZM1262 133L1266.5 135L1271 133M1266.5 135V141" fill="none" stroke="#7a3aa8" stroke-width="1"/><rect x="1269.5" y="142.5" width="6" height="6" rx="1" fill="#444"/><path d="M1270.5 142.5V141Q1272.5 138.5 1274.5 141V142.5" fill="none" stroke="#444" stroke-width="1"/><path d="M1583.75 140.5H1589L1586.375 145.5Z" fill="#222"/><path d="M232.5 743.5L235.8 747.5Q237 746 238 745L243 750L237.5 756L236.5 752.5Q233.5 752.5 231.5 749Z" fill="#d9ead9" stroke="#333" stroke-width="1.3" stroke-linejoin="round"/><path d="M376.5 767.3L382.5 771.8L376.5 776.2Z" fill="#5aaa6a"/><rect x="384" y="767.3" width="1.5" height="9" fill="#5aaa6a"/><ellipse cx="542.2" cy="751.3" rx="6.8" ry="9" fill="#e3200d"/><path d="M539 747L545.4 755.6M545.4 747L539 755.6" stroke="#fff" stroke-width="2.2"/><path d="M669.5 292.5H676" stroke="#8a8a8a" stroke-width="1.2" stroke-dasharray="1.2 1.6"/><rect x="1569.5" y="158.5" width="22" height="23" fill="#fbfbfd" stroke="#c9cde0" stroke-width="1"/><path d="M1575 169.5H1586M1575 172H1586M1580.5 162V167.5M1580.5 174V179.5M1578 164.5L1580.5 162L1583 164.5M1578 177L1580.5 179.5L1583 177" fill="none" stroke="#333" stroke-width="1.3"/><path d="M1576 198H1586L1581 192.5Z" fill="#9a9ca8"/><path d="M1577 1038H1585.5L1581.25 1045Z" fill="#8f919c"/><rect x="1584" y="256" width="4.5" height="7" fill="#a83a3a"/><rect x="1588" y="255" width="4" height="10" fill="#b8b8b8"/><rect x="1575" y="265" width="4" height="7" fill="#9a80e0"/><rect x="1588" y="268" width="4" height="8" fill="#b0b0b0"/><rect x="1587" y="280" width="5" height="7" fill="#107c10"/><rect x="1575" y="290" width="3.5" height="5" fill="#9a80e0"/><rect x="1588" y="287" width="4" height="15" fill="#b8b8b8"/><rect x="1587" y="333" width="5" height="8" fill="#107c10"/><rect x="1587" y="405" width="5" height="8" fill="#107c10"/><rect x="1587" y="483" width="5" height="7" fill="#107c10"/><rect x="1575" y="560" width="3.5" height="6" fill="#9a80e0"/><rect x="1587" y="672" width="5" height="8" fill="#107c10"/><rect x="1588" y="762" width="4" height="10" fill="#b0b0b0"/><rect x="1575" y="810" width="3.5" height="6" fill="#9a80e0"/><rect x="1575" y="916" width="3.5" height="5" fill="#9a80e0"/><rect x="1569" y="817" width="23" height="2" fill="#1a22a8"/><path d="M18.5 1061L13.5 1065.5L18.5 1070Z" fill="#8a8d9a"/><path d="M209 1061L214 1065.5L209 1070Z" fill="#8a8d9a"/><path d="M282 1063.7H288L285 1068.7Z" fill="#222"/><ellipse cx="324.6" cy="1065.5" rx="5.9" ry="7.5" fill="#e3200d"/><path d="M322 1062L327.2 1069M327.2 1062L322 1069" stroke="#fff" stroke-width="1.9"/><path d="M372.5 1058.5L378.5 1073H366.5Z" fill="#f5c518"/><path d="M372.5 1063V1069M372.5 1070.5V1072" stroke="#222" stroke-width="1.6"/><path d="M434.5 1066H425.5M429.5 1062L425.5 1066L429.5 1070" fill="none" stroke="#1b5fc0" stroke-width="1.8"/><path d="M453.5 1066H462.5M458.5 1062L462.5 1066L458.5 1070" fill="none" stroke="#1b5fc0" stroke-width="1.8"/><rect x="481" y="1057" width="1" height="18" fill="#b8bac6"/><path d="M509.5 1057.5L504.5 1065" stroke="#333" stroke-width="1.5"/><path d="M502 1064L507 1067L503 1073.5L497.5 1071Z" fill="none" stroke="#333" stroke-width="1.3" stroke-linejoin="round"/><path d="M500 1069L504 1071" stroke="#333" stroke-width="1"/><path d="M514 1064H521L517.5 1069.5Z" fill="#222"/><path d="M558 1061L552.5 1066L558 1071Z" fill="#a0a2ac"/><path d="M1557 1061L1562.5 1066L1557 1071Z" fill="#a0a2ac"/><path d="M7.5 1133.5H20.5L17.5 1149.5H4.5Z" fill="none" stroke="#fff" stroke-width="1.2"/><path d="M1386 1148V1136M1382.5 1139.5L1386 1135.5L1389.5 1139.5" fill="none" stroke="#fff" stroke-width="1.6"/><path d="M1531 1142.5H1539L1535 1137Z" fill="#fff"/><path d="M1560 1143Q1561 1140 1561 1136Q1561 1131 1566 1131Q1571 1131 1571 1136Q1571 1140 1572 1143Z" fill="#d8d8d8"/><ellipse cx="1574.5" cy="1146" rx="6.5" ry="8" fill="#fff"/></svg>
<div class="t" style="left:1571.50px;top:1136.50px;font-size:10px;color:#222;transform:scale(1.0811,1.3);">2</div>
<svg class="r" style="left:0;top:0" width="1600" height="1160"><path d="M542.5 762.5L552 776.5H542.5Z" fill="#dde3f0"/></svg>
<div class="r" style="left:529px;top:776px;width:375px;height:212px;background:#f5f6fb;box-shadow:0 0 0 1px #d9dce8, 1px 2px 3px rgba(0,0,0,0.08);"></div>
<div class="r" style="left:529px;top:776px;width:375px;height:31px;background:#dde3f0;"></div>
<div class="t" style="left:538.75px;top:783.20px;font-size:12px;color:#333333;transform:scale(0.9195,1.31);">Exception User Unhandled</div>
<div class="t" style="left:539.75px;top:820.00px;font-size:12px;font-weight:700;color:#111111;transform:scale(0.8945,1.31);">System.ObjectDisposedException:</div>
<div class="t" style="left:722.00px;top:820.30px;font-size:12px;color:#1e1e1e;transform:scale(0.8990,1.31);">'The CancellationTokenSource has</div>
<div class="t" style="left:539.75px;top:840.00px;font-size:12px;color:#1e1e1e;transform:scale(0.9110,1.31);">been disposed.'</div>
<div class="t" style="left:539.50px;top:929.00px;font-size:12px;color:#1e64c0;transform:scale(0.9116,1.31);">View Details</div>
<div class="t" style="left:612.00px;top:929.00px;font-size:12px;color:#1e64c0;transform:scale(0.9076,1.31);">Copy Details</div>
<div class="t" style="left:686.25px;top:929.00px;font-size:12px;color:#1e64c0;transform:scale(0.8708,1.31);">Start Live Share session...</div>
<div class="r" style="left:605px;top:927px;width:1px;height:21px;background:#b4b8c8;"></div>
<div class="r" style="left:679.5px;top:927px;width:1.0px;height:21px;background:#b4b8c8;"></div>
<div class="t" style="left:551.25px;top:957.00px;font-size:12px;color:#1e1e1e;transform:scale(0.9103,1.31);">Exception Settings</div>
<svg class="r" style="left:0;top:0" width="1600" height="1160"><path d="M541.8 961L546 966L541.8 971Z" fill="none" stroke="#222" stroke-width="1.2"/><path d="M871 786H876M872 786V794H875V786M869.5 794H877.5M873.5 794V800" fill="none" stroke="#333" stroke-width="1.3"/><path d="M888.5 786L898.5 798M898.5 786L888.5 798" stroke="#222" stroke-width="2"/><rect x="900" y="973" width="1.3" height="1.5" fill="#b0b0b0"/><rect x="900" y="977" width="1.3" height="1.5" fill="#b0b0b0"/><rect x="900" y="981" width="1.3" height="1.5" fill="#b0b0b0"/><rect x="896" y="977" width="1.3" height="1.5" fill="#b0b0b0"/><rect x="896" y="981" width="1.3" height="1.5" fill="#b0b0b0"/><rect x="892" y="981" width="1.3" height="1.5" fill="#b0b0b0"/><ellipse cx="692" cy="843" rx="14.5" ry="16.5" fill="none" stroke="#e9df3a" stroke-width="2.2"/><path d="M692 832.5V853M689 832.5H695M689 853H695" stroke="#111" stroke-width="1.3"/></svg>
</body></html>
